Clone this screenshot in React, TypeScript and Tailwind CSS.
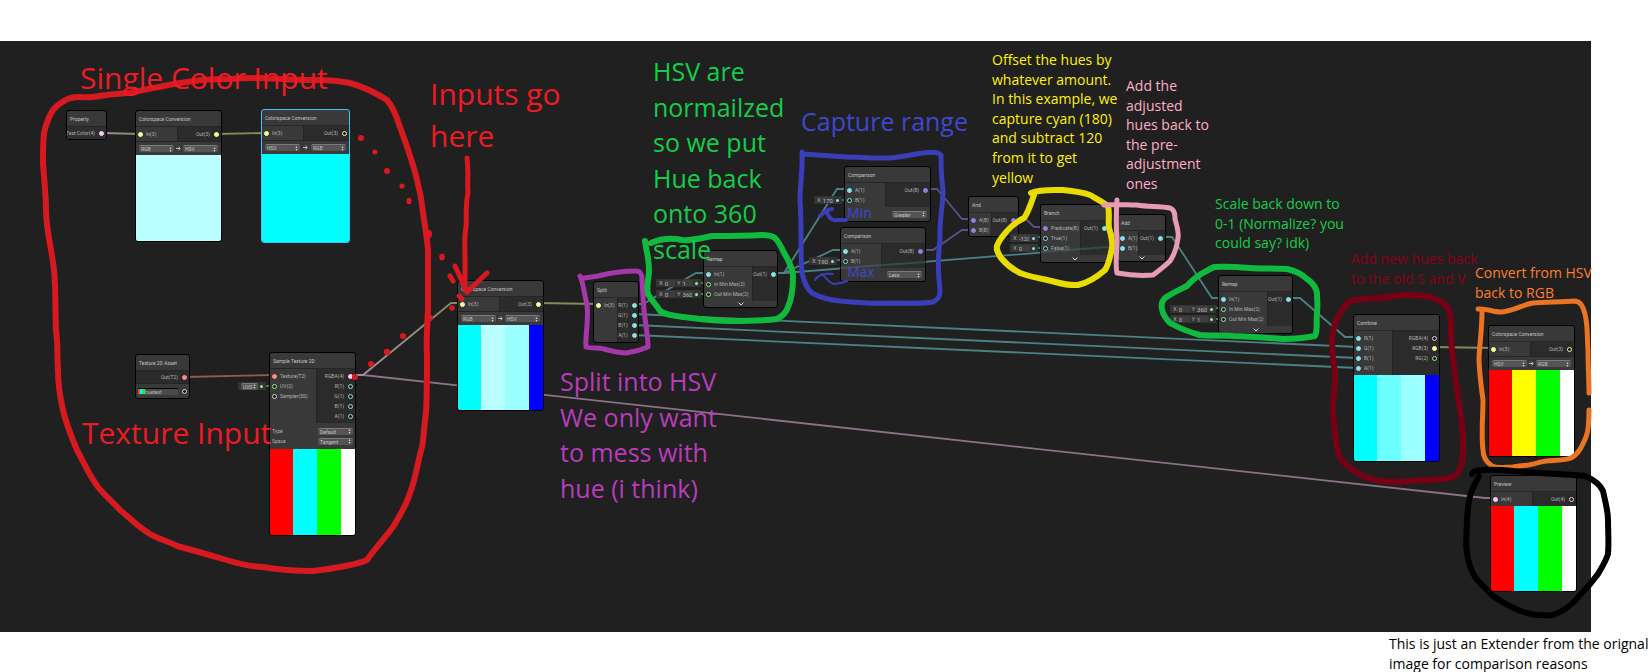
import React from "react";

/* ---------- ports ---------- */

const portFill: Record<string, string> = {
  yellow: "border-[#f6ff9a] bg-[#f6ff9a]",
  cyan: "border-[#84e4e7] bg-[#84e4e7]",
  pink: "border-[#fbcbf4] bg-[#fbcbf4]",
  red: "border-[#ff8b8b] bg-[#ff8b8b]",
  violet: "border-[#9481e6] bg-[#9481e6]",
};

const portHollow: Record<string, string> = {
  yellow: "border-[#f6ff9a]",
  cyan: "border-[#84e4e7]",
  pink: "border-[#fbcbf4]",
  green: "border-[#9aef92]",
  white: "border-[#d8d8d8]",
};

type PortProps = { label: string; color: string; open?: boolean };

function Dot({ color, open }: { color: string; open?: boolean }) {
  return (
    <span
      className={`block size-[5px] shrink-0 rounded-full border ${
        open ? `${portHollow[color]} bg-[#1a1a1a]` : portFill[color]
      }`}
    />
  );
}

function InPort({ label, color, open }: PortProps) {
  return (
    <div className="flex items-center gap-[3px]">
      <Dot color={color} open={open} />
      <span className="whitespace-nowrap">{label}</span>
    </div>
  );
}

function OutPort({ label, color, open }: PortProps) {
  return (
    <div className="flex items-center justify-end gap-[4px]">
      <span className="whitespace-nowrap">{label}</span>
      <Dot color={color} open={open} />
    </div>
  );
}

/* ---------- node parts ---------- */

type NodeProps = {
  title: string;
  place: string;
  selected?: boolean;
  children: React.ReactNode;
};

function Node({ title, place, selected, children }: NodeProps) {
  return (
    <article
      className={`absolute flex flex-col overflow-hidden rounded-[3px] border bg-[#393939] font-['Roboto',sans-serif] text-[5px] leading-[10px] text-[#b4b4b4] ${
        selected ? "border-[#44c0ff]" : "border-black"
      } ${place}`}
    >
      <h3 className="h-[16px] shrink-0 whitespace-nowrap border-b border-[#262626] px-[3px] pt-[1px] text-[5px] leading-[14px] text-[#c4c4c4]">
        {title}
      </h3>
      {children}
    </article>
  );
}

function Ports({
  inputs,
  outputs,
  inWidth,
}: {
  inputs: PortProps[];
  outputs: PortProps[];
  inWidth: string;
}) {
  return (
    <div className="flex">
      <div className={`flex shrink-0 flex-col py-[2px] pl-[2px] ${inWidth}`}>
        {inputs.map((p) => (
          <InPort key={p.label} {...p} />
        ))}
      </div>
      <div className="flex flex-1 flex-col border-l border-[#242424] bg-[#2b2b2b] py-[2px] pr-[2px]">
        {outputs.map((p) => (
          <OutPort key={p.label} {...p} />
        ))}
      </div>
    </div>
  );
}

function Pick({ label, value, width }: { label: string; value: string; width: string }) {
  return (
    <span
      className={`flex h-[7px] shrink-0 items-center rounded-[2px] border-t border-[#7a7a7a] bg-[#545454] pr-[2px] ${width}`}
    >
      <select
        aria-label={label}
        className="h-[6px] min-w-0 flex-1 appearance-none bg-transparent pl-[2px] text-[5px] leading-[6px] text-[#c4c4c4]"
      >
        <option>{value}</option>
      </select>
      <svg viewBox="0 0 3 5" className="h-[5px] w-[3px]" fill="#d0d0d0" aria-hidden="true">
        <path d="M1.5 0 2.5 2H.5ZM1.5 5 .5 3h2Z" />
      </svg>
    </span>
  );
}

function Conversion({ from, to }: { from: string; to: string }) {
  return (
    <div className="flex h-[14px] shrink-0 items-center justify-between border-t border-[#242424] px-[3px]">
      <Pick label="From" value={from} width="w-[35px]" />
      <svg viewBox="0 0 5 5" className="size-[5px]" stroke="#c0c0c0" fill="none" aria-hidden="true">
        <path d="M0 2.5H4M2.5 .8 4.3 2.5 2.5 4.2" />
      </svg>
      <Pick label="To" value={to} width="w-[35px]" />
    </div>
  );
}

function Stripes({ colors }: { colors: string[] }) {
  return (
    <div className="-mx-px flex min-h-0 flex-1">
      {colors.map((c, i) => (
        <div key={i} className={`${i < 3 ? "w-[24px] shrink-0" : "flex-1"} ${c}`} />
      ))}
    </div>
  );
}

function Chevron() {
  return (
    <div className="flex flex-1 items-center justify-center">
      <svg viewBox="0 0 6 4" className="h-[4px] w-[6px]" fill="none" stroke="#e2e2e2" aria-hidden="true">
        <path d="M.6.6 3 3 5.4.6" />
      </svg>
    </div>
  );
}

function Field({
  place,
  values,
  color,
}: {
  place: string;
  values: [string, string][];
  color: string;
}) {
  return (
    <div
      className={`absolute flex h-[8px] items-center gap-[2px] bg-[#343434] px-[3px] font-['Roboto',sans-serif] text-[6px] leading-[8px] text-[#a8a8a8] ${place}`}
    >
      {values.map(([axis, value]) => (
        <label key={axis} className="flex min-w-0 flex-1 items-center gap-[1px]">
          {axis}
          <input
            readOnly
            value={value}
            className="h-[6px] w-full min-w-0 bg-[#3d3d3d] px-[1px] text-[6px] leading-[6px] text-[#b4b4b4]"
          />
        </label>
      ))}
      <span className={`block size-[3px] shrink-0 rounded-full ${color}`} />
    </div>
  );
}

function Note({ place, children }: { place: string; children: React.ReactNode }) {
  return <p className={`absolute whitespace-pre ${place}`}>{children}</p>;
}

/* ---------- drawings ---------- */

function Wires() {
  return (
    <svg
      className="absolute left-0 top-0 h-[672px] w-[1649px]"
      viewBox="0 0 1649 672"
      fill="none"
      strokeWidth="1.8"
      aria-hidden="true"
    >
      <defs>
        <linearGradient id="rgba" gradientUnits="userSpaceOnUse" x1="355" y1="375" x2="462" y2="303">
          <stop offset="0" stopColor="#a58da1" />
          <stop offset="1" stopColor="#85895b" />
        </linearGradient>
        <linearGradient id="prop" gradientUnits="userSpaceOnUse" x1="102" y1="133" x2="140" y2="134">
          <stop offset="0" stopColor="#a58da1" />
          <stop offset="1" stopColor="#85895b" />
        </linearGradient>
      </defs>
      <path stroke="url(#prop)" d="M102 133 140 134" />
      <path stroke="#8a7288" d="M350 375H363L1485 498H1495" />
      <path stroke="url(#rgba)" d="M350 375H363L451 303H462" />
      <path stroke="#85895b" d="M217 134 267 133M538 303 598 304M1435 347 1493 348" />
      <path stroke="#935858" d="M185 377 274 375" />
      <g stroke="#4c8083">
        <path d="M634 304H643L696 273H708" />
        <path d="M634 314 1358 347M634 325 1358 358M634 335 1358 368" />
        <path d="M772 273H784L837 189H850" />
        <path d="M784 273 833 250H845" />
        <path d="M784 273 1111 247H1122" />
        <path d="M1101 227H1108L1116 237H1122" />
        <path d="M1160 237H1172L1212 298H1224" />
        <path d="M1287 298H1300L1345 337H1358" />
      </g>
      <path
        stroke="#5d4f86"
        d="M925 189H937L962 219H974M920 250H933L962 230H974M1013 219H1026L1034 227H1046"
      />
      <path stroke="#4d7a3f" d="M264 386H274M698 283H708M698 294H708M1213 308H1224M1213 319H1224" />
      <path stroke="#3f7376" d="M840 200H850M836 260H845M1036 237H1046M1036 248H1046" />
    </svg>
  );
}

function Scribbles() {
  return (
    <svg
      className="pointer-events-none absolute left-0 top-0 h-[672px] w-[1649px]"
      viewBox="0 0 1649 672"
      fill="none"
      strokeLinecap="round"
      strokeLinejoin="round"
      aria-hidden="true"
    >
      <path stroke="#4c8083" strokeOpacity=".35" strokeWidth="2" d="M841 268 926 262M1041 252 1108 247" />
      <g stroke="#d71920" strokeWidth="6">
        <path d="M71 98C78 96 84 98 91 97C100 97 106 94 116 94C128 93 134 93 143 90C158 87 172 84 187 82C202 79 216 79 230 79C245 78 255 78 263 78C282 79 300 80 317 80C330 80 340 81 350 83C364 87 376 93 387 100C394 108 397 118 400 127C407 146 413 163 417 180C420 191 422 202 423 213C425 226 427 238 428 250V310C427 330 426 340 427 357C427 380 427 395 426 413C424 426 424 436 422 447C417 464 416 478 410 493C406 506 399 517 393 527C384 539 376 547 367 560C358 564 350 565 340 567C330 569 322 570 313 571C296 571 280 570 263 567C250 567 236 563 223 559C206 554 192 550 177 546C168 541 158 539 150 534C138 527 131 519 120 510C113 502 105 496 98 487C89 475 84 463 77 450C71 436 66 424 63 410C60 397 58 383 58 370C57 356 58 345 56 330C55 308 56 290 54 270C52 250 46 230 46 210C46 194 44 178 43 163C43 152 43 142 44 133C46 124 49 116 53 110C58 104 63 101 70 98" />
      </g>
      <g stroke="#d71920" strokeWidth="5">
        <path d="M467 158C469 172 467 182 468 193C465 205 467 216 466 227C464 238 465 247 465 257V290M455 266 467 292 487 273" />
        <path d="M450 276 453 281M459 296 462 299" />
      </g>
      <g fill="#d71920">
        <circle cx="361" cy="138" r="3" />
        <circle cx="375" cy="152" r="2.6" />
        <circle cx="387" cy="171" r="3" />
        <circle cx="402" cy="186" r="2.6" />
        <ellipse cx="409" cy="201" rx="2.6" ry="3.2" />
        <ellipse cx="429" cy="234" rx="3" ry="4" />
        <ellipse cx="442" cy="257" rx="2.8" ry="3.6" />
        <circle cx="452" cy="308" r="2.8" />
        <circle cx="430" cy="318" r="3" />
        <circle cx="403" cy="336" r="3" />
        <circle cx="387" cy="352" r="3.2" />
        <circle cx="371" cy="364" r="3" />
        <circle cx="355" cy="377" r="3" />
      </g>
      <path
        stroke="#a438a8"
        strokeWidth="5"
        d="M580 276C583 282 584 292 587 305C589 320 585 335 586 347C592 349 598 347 604 349C612 351 618 353 626 353C634 352 641 350 648 347C648 336 646 328 645 318C643 305 643 292 642 280C642 274 641 271 636 271C622 271 610 273 598 276L584 278"
      />
      <path
        stroke="#0fba3f"
        strokeWidth="6"
        d="M645 241C646 250 649 258 649 270C649 279 646 286 648 294C651 300 656 304 660 311C666 315 674 316 683 317C700 319 714 321 730 321C748 321 762 321 777 319C783 316 786 313 788 307C792 298 793 288 793 277C793 269 790 264 787 258C782 250 781 244 775 238C771 235 767 235 762 235C744 236 728 236 712 236C702 238 692 241 682 240C672 238 660 239 651 243"
      />
      <path
        stroke="#3a3fb9"
        strokeWidth="5"
        d="M802 152C803 168 800 184 800 200C802 226 800 250 802 273C804 281 806 288 812 293C821 298 830 300 840 301C860 303 878 304 897 303C910 303 922 304 933 302C939 299 940 296 940 290C938 274 938 256 940 240C939 222 943 206 943 190C941 176 941 164 941 155C938 152 930 152 923 153C908 155 894 159 880 158C868 158 858 157 847 157C832 156 818 155 803 154"
      />
      <path stroke="#3a3fb9" strokeWidth="4" d="M820 216C823 213 825 210 832 209M826 211C829 217 831 221 837 220L846 220" />
      <path stroke="#3a3fb9" strokeWidth="2" d="M815 280C818 274 824 273 833 274M822 274C826 277 829 284 834 284C840 283 843 283 847 281" />
      <path
        stroke="#e8dc00"
        strokeWidth="6"
        d="M1031 193C1041 189 1053 190 1063 190C1074 191 1082 192 1090 195C1097 199 1103 202 1108 206C1110 213 1108 220 1109 228C1111 235 1113 241 1112 248C1110 257 1109 264 1105 270C1097 277 1087 283 1078 285C1066 286 1057 282 1047 280C1037 278 1028 276 1020 273C1012 269 1006 264 1001 258C998 253 996 250 997 246C999 240 1003 236 1007 231C1012 225 1018 221 1024 218C1028 213 1030 206 1034 195"
      />
      <path
        stroke="#e79cb3"
        strokeWidth="5"
        d="M1104 205C1116 204 1126 205 1137 205C1148 207 1160 206 1170 208C1175 210 1175 215 1175 219C1177 226 1179 232 1178 238C1177 247 1174 255 1170 261C1164 267 1158 271 1153 275C1142 276 1128 275 1117 273C1115 266 1117 250 1117 240C1116 226 1116 214 1117 200"
      />
      <path
        stroke="#0fba3f"
        strokeWidth="6"
        d="M1214 267C1226 266 1238 267 1250 268C1263 269 1275 268 1287 269C1296 271 1302 274 1307 279C1313 283 1316 287 1317 293C1317 300 1318 306 1317 313C1316 322 1318 330 1315 336C1305 338 1294 339 1283 339C1266 338 1250 336 1233 336C1222 335 1211 336 1200 335C1189 332 1179 328 1170 323C1166 319 1163 315 1162 309C1161 305 1162 301 1165 298C1172 293 1179 290 1187 286C1191 281 1195 278 1201 274C1206 271 1210 269 1214 267"
      />
      <path
        stroke="#780014"
        strokeWidth="6"
        d="M1353 300C1362 299 1371 298 1380 298C1389 297 1398 295 1407 295C1417 295 1426 295 1433 298C1441 301 1448 305 1450 313C1452 327 1450 342 1453 357C1455 380 1459 402 1462 423C1463 438 1464 450 1462 463C1460 470 1458 475 1452 477C1444 480 1437 479 1430 480C1418 480 1406 482 1393 482C1378 482 1366 478 1357 473C1349 467 1340 461 1338 453C1335 440 1334 426 1333 413C1333 400 1335 386 1335 373C1333 362 1332 350 1332 340C1333 331 1334 323 1338 317C1342 310 1346 303 1353 300"
      />
      <path
        stroke="#e87424"
        strokeWidth="5"
        d="M1478 309C1486 308 1493 312 1500 312C1512 312 1521 305 1533 303C1547 302 1563 302 1574 301C1581 301 1583 307 1585 314C1588 326 1587 338 1588 350C1588 366 1589 380 1589 393M1589 410C1589 420 1589 430 1586 437C1582 446 1579 454 1571 458C1560 462 1548 459 1537 463C1529 466 1522 465 1513 467C1505 467 1498 469 1492 466C1486 462 1483 457 1483 450C1481 433 1483 416 1483 400C1481 385 1479 371 1479 357C1480 341 1482 328 1482 312"
      />
      <path
        stroke="#000000"
        strokeWidth="6"
        d="M1472 474C1473 471 1477 470 1482 470C1497 469 1512 471 1527 472C1547 474 1568 474 1585 476C1592 479 1600 484 1603 491C1605 501 1608 510 1608 520C1608 532 1609 542 1608 554C1606 561 1602 567 1598 574C1593 581 1587 588 1580 595C1573 604 1565 611 1553 615C1542 616 1533 615 1523 612C1512 608 1502 602 1493 596C1487 589 1480 584 1475 577C1471 570 1468 562 1467 553C1465 542 1467 531 1467 520C1468 510 1468 502 1471 493C1473 487 1476 481 1479 476"
      />
    </svg>
  );
}

/* ---------- page ---------- */

const big = "text-[25px] leading-[1.42]";
const huge = "text-[30px] leading-[42px]";
const small = "text-[14px] leading-[1.4]";

export default function App() {
  return (
    <figure className="relative overflow-hidden bg-white pt-[41px] font-['Open_Sans','Noto_Sans',sans-serif]">
      <div className="mr-[58px] h-[591px] bg-[#202020]" />

      <Wires />

      <Node title="Property" place="left-[66px] top-[110px] w-[41px] h-[30px]">
        <div className="flex-1 bg-[#2f2f2f] py-[1px] pr-[2px]">
          <OutPort label="Test Color(4)" color="pink" />
        </div>
      </Node>

      <Node title="Colorspace Conversion" place="left-[135px] top-[110px] w-[87px] h-[132px]">
        <Ports
          inWidth="w-[41px]"
          inputs={[{ label: "In(3)", color: "yellow" }]}
          outputs={[{ label: "Out(3)", color: "yellow" }]}
        />
        <Conversion from="RGB" to="HSV" />
        <Stripes colors={["bg-[#b9ffff]", "bg-[#b9ffff]", "bg-[#b9ffff]", "bg-[#b9ffff]"]} />
      </Node>

      <Node selected title="Colorspace Conversion" place="left-[261px] top-[109px] w-[89px] h-[134px]">
        <Ports
          inWidth="w-[41px]"
          inputs={[{ label: "In(3)", color: "yellow" }]}
          outputs={[{ label: "Out(3)", color: "yellow", open: true }]}
        />
        <Conversion from="HSV" to="RGB" />
        <Stripes colors={["bg-[#00ffff]", "bg-[#00ffff]", "bg-[#00ffff]", "bg-[#00ffff]"]} />
      </Node>

      <Node title="Texture 2D Asset" place="left-[135px] top-[354px] w-[55px] h-[45px]">
        <div className="bg-[#2b2b2b] py-[1px] pr-[2px]">
          <OutPort label="Out(T2)" color="red" />
        </div>
        <div className="flex flex-1 items-center gap-[4px] border-t border-[#242424] px-[2px]">
          <div className="flex h-[7px] w-[42px] items-center border-t border-black bg-[#4a4a4a]">
            <span className="h-[5px] w-[2px] bg-[#ff3b3b]" />
            <span className="h-[5px] w-[2px] bg-[#00ffff]" />
            <span className="h-[5px] w-[3px] bg-[#00ff40]" />
            <span className="text-[5px] leading-[6px] text-[#b8b8b8]">huetest</span>
          </div>
          <Dot color="white" open />
        </div>
      </Node>

      <div className="absolute left-[238px] top-[382px] flex h-[8px] w-[28px] items-center justify-between bg-[#343434] px-[3px] font-['Roboto',sans-serif]">
        <Pick label="UV channel" value="UV0" width="w-[17px]" />
        <span className="block size-[3px] rounded-full bg-[#9aef92]" />
      </div>

      <Node title="Sample Texture 2D" place="left-[269px] top-[352px] w-[87px] h-[184px]">
        <Ports
          inWidth="w-[46px]"
          inputs={[
            { label: "Texture(T2)", color: "red" },
            { label: "UV(2)", color: "green", open: true },
            { label: "Sampler(SS)", color: "white", open: true },
          ]}
          outputs={[
            { label: "RGBA(4)", color: "pink" },
            { label: "R(1)", color: "cyan", open: true },
            { label: "G(1)", color: "cyan", open: true },
            { label: "B(1)", color: "cyan", open: true },
            { label: "A(1)", color: "cyan", open: true },
          ]}
        />
        <div className="flex h-[26px] shrink-0 flex-col justify-center px-[2px]">
          <div className="flex items-center justify-between">
            Type
            <Pick label="Type" value="Default" width="w-[35px]" />
          </div>
          <div className="flex items-center justify-between">
            Space
            <Pick label="Space" value="Tangent" width="w-[35px]" />
          </div>
        </div>
        <Stripes colors={["bg-[#ff0000]", "bg-[#00ffff]", "bg-[#00ff00]", "bg-white"]} />
      </Node>

      <Node title="Colorspace Conversion" place="left-[457px] top-[280px] w-[87px] h-[131px]">
        <Ports
          inWidth="w-[41px]"
          inputs={[{ label: "In(3)", color: "yellow" }]}
          outputs={[{ label: "Out(3)", color: "yellow" }]}
        />
        <Conversion from="RGB" to="HSV" />
        <Stripes colors={["bg-[#00ffff]", "bg-[#b9ffff]", "bg-[#9bffff]", "bg-[#0000ff]"]} />
      </Node>

      <Node title="Split" place="left-[593px] top-[281px] w-[46px] h-[62px]">
        <Ports
          inWidth="w-[23px]"
          inputs={[{ label: "In(3)", color: "yellow" }]}
          outputs={[
            { label: "R(1)", color: "cyan" },
            { label: "G(1)", color: "cyan" },
            { label: "B(1)", color: "cyan" },
            { label: "A(1)", color: "cyan" },
          ]}
        />
      </Node>

      <Node title="Remap" place="left-[703px] top-[250px] w-[75px] h-[58px]">
        <Ports
          inWidth="w-[48px]"
          inputs={[
            { label: "In(1)", color: "cyan" },
            { label: "In Min Max(2)", color: "green", open: true },
            { label: "Out Min Max(2)", color: "green", open: true },
          ]}
          outputs={[{ label: "Out(1)", color: "cyan" }]}
        />
        <Chevron />
      </Node>
      <Field place="left-[656px] top-[279px] w-[45px]" values={[["X", "0"], ["Y", "1"]]} color="bg-[#9aef92]" />
      <Field place="left-[656px] top-[290px] w-[45px]" values={[["X", "0"], ["Y", "360"]]} color="bg-[#9aef92]" />

      <Node title="Comparison" place="left-[844px] top-[166px] w-[87px] h-[56px]">
        <Ports
          inWidth="w-[40px]"
          inputs={[
            { label: "A(1)", color: "cyan" },
            { label: "B(1)", color: "cyan", open: true },
          ]}
          outputs={[{ label: "Out(B)", color: "violet" }]}
        />
        <div className="flex flex-1 items-center justify-end px-[3px]">
          <Pick label="Comparison" value="Greater" width="w-[35px]" />
        </div>
      </Node>
      <Field place="left-[814px] top-[196px] w-[28px]" values={[["X", "170"]]} color="bg-[#84e4e7]" />

      <Node title="Comparison" place="left-[840px] top-[227px] w-[86px] h-[55px]">
        <Ports
          inWidth="w-[40px]"
          inputs={[
            { label: "A(1)", color: "cyan" },
            { label: "B(1)", color: "cyan", open: true },
          ]}
          outputs={[{ label: "Out(B)", color: "violet" }]}
        />
        <div className="flex flex-1 items-center justify-end px-[3px]">
          <Pick label="Comparison" value="Less" width="w-[35px]" />
        </div>
      </Node>
      <Field place="left-[809px] top-[257px] w-[28px]" values={[["X", "190"]]} color="bg-[#84e4e7]" />

      <Node title="And" place="left-[968px] top-[196px] w-[51px] h-[41px]">
        <Ports
          inWidth="w-[22px]"
          inputs={[
            { label: "A(B)", color: "violet" },
            { label: "B(B)", color: "violet" },
          ]}
          outputs={[{ label: "Out(B)", color: "violet" }]}
        />
      </Node>

      <Node title="Branch" place="left-[1040px] top-[204px] w-[70px] h-[59px]">
        <Ports
          inWidth="w-[39px]"
          inputs={[
            { label: "Predicate(B)", color: "violet" },
            { label: "True(1)", color: "cyan", open: true },
            { label: "False(1)", color: "cyan", open: true },
          ]}
          outputs={[{ label: "Out(1)", color: "cyan" }]}
        />
        <Chevron />
      </Node>
      <Field place="left-[1010px] top-[234px] w-[28px]" values={[["X", "-120"]]} color="bg-[#84e4e7]" />
      <Field place="left-[1010px] top-[244px] w-[28px]" values={[["X", "0"]]} color="bg-[#84e4e7]" />

      <Node title="Add" place="left-[1117px] top-[214px] w-[49px] h-[48px]">
        <Ports
          inWidth="w-[20px]"
          inputs={[
            { label: "A(1)", color: "cyan" },
            { label: "B(1)", color: "cyan" },
          ]}
          outputs={[{ label: "Out(1)", color: "cyan" }]}
        />
        <Chevron />
      </Node>

      <Node title="Remap" place="left-[1218px] top-[275px] w-[75px] h-[59px]">
        <Ports
          inWidth="w-[48px]"
          inputs={[
            { label: "In(1)", color: "cyan" },
            { label: "In Min Max(2)", color: "green", open: true },
            { label: "Out Min Max(2)", color: "green", open: true },
          ]}
          outputs={[{ label: "Out(1)", color: "cyan" }]}
        />
        <Chevron />
      </Node>
      <Field place="left-[1170px] top-[305px] w-[46px]" values={[["X", "0"], ["Y", "360"]]} color="bg-[#9aef92]" />
      <Field place="left-[1170px] top-[315px] w-[46px]" values={[["X", "0"], ["Y", "1"]]} color="bg-[#9aef92]" />

      <Node title="Combine" place="left-[1353px] top-[314px] w-[87px] h-[148px]">
        <Ports
          inWidth="w-[38px]"
          inputs={[
            { label: "R(1)", color: "cyan" },
            { label: "G(1)", color: "cyan" },
            { label: "B(1)", color: "cyan" },
            { label: "A(1)", color: "cyan" },
          ]}
          outputs={[
            { label: "RGBA(4)", color: "pink", open: true },
            { label: "RGB(3)", color: "yellow" },
            { label: "RG(2)", color: "green", open: true },
          ]}
        />
        <Stripes colors={["bg-[#00ffff]", "bg-[#6bffff]", "bg-[#9bffff]", "bg-[#0000ff]"]} />
      </Node>

      <Node title="Colorspace Conversion" place="left-[1488px] top-[325px] w-[87px] h-[132px]">
        <Ports
          inWidth="w-[41px]"
          inputs={[{ label: "In(3)", color: "yellow" }]}
          outputs={[{ label: "Out(3)", color: "yellow", open: true }]}
        />
        <Conversion from="HSV" to="RGB" />
        <Stripes colors={["bg-[#ff0000]", "bg-[#ffff00]", "bg-[#00ff00]", "bg-white"]} />
      </Node>

      <Node title="Preview" place="left-[1490px] top-[475px] w-[87px] h-[117px]">
        <Ports
          inWidth="w-[41px]"
          inputs={[{ label: "In(4)", color: "pink" }]}
          outputs={[{ label: "Out(4)", color: "pink", open: true }]}
        />
        <Stripes colors={["bg-[#ff0000]", "bg-[#00ffff]", "bg-[#00ff00]", "bg-white"]} />
      </Node>

      <Scribbles />

      <Note place={`left-[80px] top-[57px] text-[#ed1c24] ${huge}`}>Single Color Input</Note>
      <Note place={`left-[82px] top-[412px] text-[#ed1c24] ${huge}`}>Texture Input</Note>
      <Note place={`left-[430px] top-[73px] text-[#ed1c24] ${huge}`}>{"Inputs go\nhere"}</Note>
      <Note place={`left-[653px] top-[54px] text-[#13ce48] ${big}`}>
        {"HSV are\nnormailzed\nso we put\nHue back\nonto 360\nscale"}
      </Note>
      <Note place={`left-[560px] top-[364px] text-[#b83dba] ${big}`}>
        {"Split into HSV\nWe only want\nto mess with\nhue (i think)"}
      </Note>
      <Note place={`left-[801px] top-[104px] text-[#3f48cc] ${big}`}>Capture range</Note>
      <Note place={`left-[847px] top-[203px] text-[#3f48cc] ${small}`}>Min</Note>
      <Note place={`left-[847px] top-[262px] text-[#3f48cc] ${small}`}>Max</Note>
      <Note place={`left-[992px] top-[50px] text-[#fff200] ${small}`}>
        {"Offset the hues by\nwhatever amount.\nIn this example, we\ncapture cyan (180)\nand subtract 120\nfrom it to get\nyellow"}
      </Note>
      <Note place={`left-[1126px] top-[76px] text-[#ffaec8] ${small}`}>
        {"Add the\nadjusted\nhues back to\nthe pre-\nadjustment\nones"}
      </Note>
      <Note place={`left-[1215px] top-[194px] text-[#13ce48] ${small}`}>
        {"Scale back down to\n0-1 (Normalize? you\ncould say? idk)"}
      </Note>
      <Note place={`left-[1351px] top-[249px] text-[#88001b] ${small}`}>
        {"Add new hues back\nto the old S and V"}
      </Note>
      <Note place={`left-[1475px] top-[263px] text-[#ff7f27] ${small}`}>
        {"Convert from HSV\nback to RGB"}
      </Note>

      <figcaption className="flex h-[40px] justify-end pt-[2px]">
        <p className={`w-[260px] whitespace-pre text-black ${small}`}>
          {"This is just an Extender from the orignal\nimage for comparison reasons"}
        </p>
      </figcaption>
    </figure>
  );
}
